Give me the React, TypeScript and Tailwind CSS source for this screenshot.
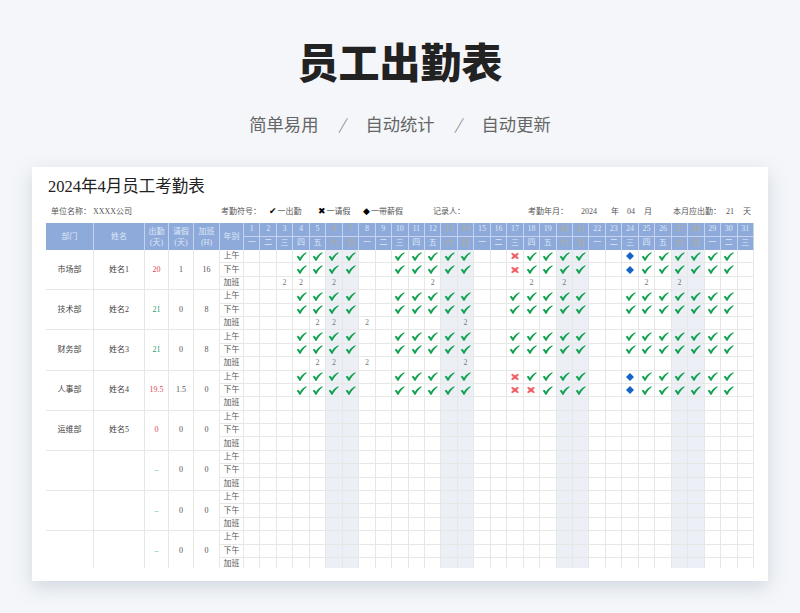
import React from 'react'

const weekNames = ['一', '二', '三', '四', '五', '六', '日']
const days = Array.from({ length: 31 }, (_, i) => i + 1)
const workDays = [4, 5, 6, 7, 10, 11, 12, 13, 14, 17, 18, 19, 20, 21, 24, 25, 26, 27, 28, 29, 30]
const isWeekend = (d: number) => (d + 6) % 7 >= 5 && (d - 1) % 7 >= 5

type Mark = 'x' | 'd'
type Group = {
  dept: string
  name: string
  work: string
  workColor: string
  leave: string
  extra: string
  am?: Record<number, Mark>
  pm?: Record<number, Mark>
  checks: boolean
  overtime: number[]
}

const RED = 'text-[#d94a55]'
const GREEN = 'text-[#1f9d63]'
const TEAL = 'text-[#4fb39a]'
const empty = { dept: '', name: '', work: '–', workColor: TEAL, leave: '0', extra: '0', checks: false, overtime: [] }

const groups: Group[] = [
  { dept: '市场部', name: '姓名1', work: '20', workColor: RED, leave: '1', extra: '16', am: { 17: 'x', 24: 'd' }, pm: { 17: 'x', 24: 'd' }, checks: true, overtime: [3, 4, 6, 12, 18, 20, 25, 27] },
  { dept: '技术部', name: '姓名2', work: '21', workColor: GREEN, leave: '0', extra: '8', checks: true, overtime: [5, 6, 8, 14] },
  { dept: '财务部', name: '姓名3', work: '21', workColor: GREEN, leave: '0', extra: '8', checks: true, overtime: [5, 6, 8, 14] },
  { dept: '人事部', name: '姓名4', work: '19.5', workColor: RED, leave: '1.5', extra: '0', am: { 17: 'x', 24: 'd' }, pm: { 17: 'x', 18: 'x', 24: 'd' }, checks: true, overtime: [] },
  { dept: '运维部', name: '姓名5', work: '0', workColor: RED, leave: '0', extra: '0', checks: false, overtime: [] },
  empty,
  empty,
  empty,
]

const line = 'border-r border-b border-[#e6e8e6]'
const serif = 'font-["Liberation_Serif","Noto_Sans_CJK_SC",serif]'

function Mark({ kind }: { kind?: Mark | 'check' }) {
  if (kind === 'check') {
    return (
      <svg viewBox="0 0 12 10" className="h-[9px] w-[11px]">
        <path d="M0.6 5.2 L2.6 4.2 L4.3 6.3 C5.9 3.9 8.3 1.6 11.4 0.3 L11.8 1 C9.2 3 7 5.8 5 9.6 L3.6 9.6 C2.7 7.8 1.7 6.4 0.6 5.2 Z" fill="#12a150" />
      </svg>
    )
  }
  if (kind === 'x') {
    return (
      <svg viewBox="0 0 10 10" className="h-2 w-2">
        <path d="M1.6 1.4 L5 3.4 L8.4 1.4 L9.4 2.6 L6.7 5 L9.4 7.4 L8.4 8.6 L5 6.6 L1.6 8.6 L0.6 7.4 L3.3 5 L0.6 2.6 Z" fill="#ef5b63" stroke="#ef5b63" strokeWidth="0.8" />
      </svg>
    )
  }
  if (kind === 'd') {
    return (
      <svg viewBox="0 0 10 10" className="h-2 w-2">
        <path d="M5 0 L10 5 L5 10 L0 5 Z" fill="#1565c8" />
      </svg>
    )
  }
  return null
}

function DayCell({ day, children }: { day: number; children?: React.ReactNode }) {
  return (
    <div className={`flex items-center justify-center text-[8px] text-[#777] ${line} ${isWeekend(day) ? 'bg-[#ecf0f6]' : ''}`}>
      {children}
    </div>
  )
}

function Legend({ kind, label, className }: { kind: string; label: string; className: string }) {
  return (
    <span className={`flex items-center ${className}`}>
      <span className="mr-px text-[9px] leading-none text-black font-['DejaVu_Sans',sans-serif]">{kind}</span>
      {label}
    </span>
  )
}

export default function App() {
  return (
    <div className="flex h-[613px] w-[800px] flex-col items-center overflow-hidden bg-[#f4f6f9] font-['Noto_Sans_CJK_SC',sans-serif]">
      <h1 className="mt-[30px] h-[60px] text-[41px] leading-[60px] font-black text-[#222]">员工出勤表</h1>

      <div className="mt-[22px] flex h-[24px] items-center text-[17.3px] leading-6 text-[#666]">
        <span>简单易用</span>
        <span className="w-[47px] text-center text-[15px] font-light italic">/</span>
        <span>自动统计</span>
        <span className="w-[47px] text-center text-[15px] font-light italic">/</span>
        <span>自动更新</span>
      </div>

      <div className="mt-[31px] h-[414px] w-[736px] shrink-0 bg-white px-[14px] shadow-[0_6px_18px_rgba(120,135,160,0.28)]">
        <div className={`pt-[9px] pl-[2px] text-[16.5px] leading-[22px] text-[#222] ${serif}`}>2024年4月员工考勤表</div>

        <div className={`mt-[2px] flex h-[23px] items-center text-[8px] text-[#555] ${serif}`}>
          <span className="ml-[5px] w-[170px]">单位名称：&nbsp;XXXX公司</span>
          <span className="w-[48px]">考勤符号：</span>
          <Legend kind="✔" label="一出勤" className="w-[49px]" />
          <Legend kind="✖" label="一请假" className="w-[45px]" />
          <Legend kind="◆" label="一带薪假" className="w-[70px]" />
          <span className="w-[95px]">记录人：</span>
          <span className="w-[53px]">考勤年月：</span>
          <span className="w-[30px]">2024</span>
          <span className="w-[16px]">年</span>
          <span className="w-[17px]">04</span>
          <span className="w-[29px]">月</span>
          <span className="w-[53px]">本月应出勤：</span>
          <span className="w-[17px]">21</span>
          <span>天</span>
        </div>

        <div className="h-[345px] overflow-hidden">
          <div className={`grid grid-cols-[48px_51px_24px_25px_26px_24px_repeat(31,minmax(0,1fr))] grid-rows-[13.5px_13.5px_repeat(24,13.4px)] ${serif}`}>
            {['部门', '姓名', '出勤\n(天)', '请假\n(天)', '加班\n(H)', '年别'].map((h) => (
              <div key={h} className="row-span-2 flex items-center justify-center border-r border-[#c6d3ee] bg-[#8eaadb] text-center text-[8px] leading-[11px] whitespace-pre-line text-[#dfe7f6]">
                {h}
              </div>
            ))}
            {days.map((d) => (
              <div key={d} className={`flex items-center justify-center border-r border-b border-[#c6d3ee] bg-[#8eaadb] text-[8px] ${isWeekend(d) ? 'text-[#b9ae84]' : 'text-[#dfe7f6]'}`}>
                {d}
              </div>
            ))}
            {days.map((d) => (
              <div key={d} className={`flex items-center justify-center border-r border-[#c6d3ee] bg-[#8eaadb] text-[8px] ${isWeekend(d) ? 'text-[#b9ae84]' : 'text-[#dfe7f6]'}`}>
                {weekNames[(d - 1) % 7]}
              </div>
            ))}

            {groups.map((g, gi) => (
              <React.Fragment key={gi}>
                <div className={`row-span-3 flex items-center justify-center text-[8px] text-[#444] ${line}`}>{g.dept}</div>
                <div className={`row-span-3 flex items-center justify-center text-[8px] text-[#444] ${line}`}>{g.name}</div>
                <div className={`row-span-3 flex items-center justify-center text-[8px] ${g.workColor} ${line}`}>{g.work}</div>
                <div className={`row-span-3 flex items-center justify-center text-[8px] text-[#555] ${line}`}>{g.leave}</div>
                <div className={`row-span-3 flex items-center justify-center text-[8px] text-[#555] ${line}`}>{g.extra}</div>

                <div className={`flex items-center justify-center text-[8px] text-[#555] ${line}`}>上午</div>
                {days.map((d) => (
                  <DayCell key={d} day={d}>
                    {g.checks && workDays.includes(d) && <Mark kind={g.am?.[d] ?? 'check'} />}
                  </DayCell>
                ))}

                <div className={`flex items-center justify-center text-[8px] text-[#555] ${line}`}>下午</div>
                {days.map((d) => (
                  <DayCell key={d} day={d}>
                    {g.checks && workDays.includes(d) && <Mark kind={g.pm?.[d] ?? 'check'} />}
                  </DayCell>
                ))}

                <div className={`flex items-center justify-center text-[8px] text-[#555] ${line}`}>加班</div>
                {days.map((d) => (
                  <DayCell key={d} day={d}>
                    {g.overtime.includes(d) ? '2' : null}
                  </DayCell>
                ))}
              </React.Fragment>
            ))}
          </div>
        </div>
      </div>
    </div>
  )
}
